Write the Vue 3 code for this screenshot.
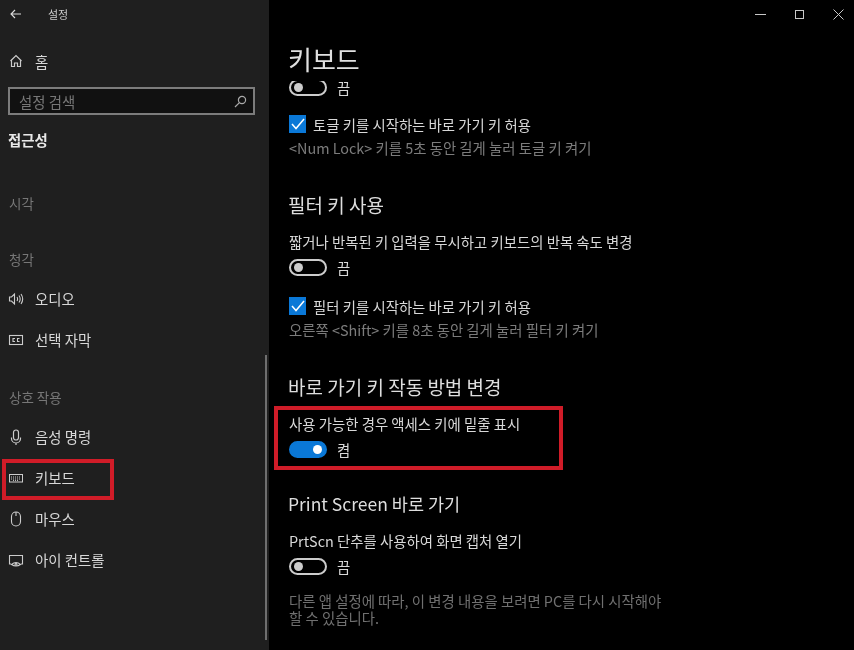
<script setup>
const visual = [
  { key: 'audio', label: '오디오' },
  { key: 'cc', label: '선택 자막' },
]
const interact = [
  { key: 'mic', label: '음성 명령' },
  { key: 'kbd', label: '키보드' },
  { key: 'mouse', label: '마우스' },
  { key: 'eye', label: '아이 컨트롤' },
]
</script>

<template>
  <div class="window">
    <aside class="side">
      <div class="titlebar">
        <svg class="back" width="11" height="10" viewBox="0 0 11 10" fill="none" stroke="currentColor" stroke-width="1.1"><path d="M1 5h10M5 1 1 5l4 4" /></svg>
        <span class="apptitle">설정</span>
      </div>
      <div class="row home">
        <svg class="ico" width="16" height="16" viewBox="0 0 16 16" fill="none" stroke="currentColor" stroke-width="1.2"><path d="M2.500 8l5.500-5.500L13.500 8M3.500 7v6.500h3V10h3v3.500h3V7" /></svg>
        <span>홈</span>
      </div>
      <div class="search">
        <span>설정 검색</span>
        <svg width="13" height="13" viewBox="0 0 13 13" fill="none" stroke="currentColor" stroke-width="1.2"><circle cx="8" cy="5" r="3.6" /><path d="M5.400 7.600 1 12" /></svg>
      </div>
      <div class="category">접근성</div>
      <div class="group g1">시각</div>
      <div class="group g2">청각</div>
      <div v-for="i in visual" :key="i.key" class="row">
        <svg v-if="i.key === 'audio'" class="ico" width="16" height="16" viewBox="0 0 16 16" fill="none" stroke="currentColor" stroke-width="1.1"><path d="M1.500 6v4h2l3 3V3l-3 3zM9 6q1.200 2 0 4M11 4.500q2.400 3.500 0 7M13 3q3.400 5 0 10" /></svg>
        <svg v-else class="ico" width="16" height="16" viewBox="0 0 16 16" fill="none" stroke="currentColor" stroke-width="1.1"><rect x="1.500" y="3.500" width="13" height="9" /><path d="M7 6.500H5v3h2M11.500 6.500h-2v3h2" /></svg>
        <span>{{ i.label }}</span>
      </div>
      <div class="group g3">상호 작용</div>
      <div v-for="i in interact" :key="i.key" class="row">
        <svg v-if="i.key === 'mic'" class="ico" width="16" height="16" viewBox="0 0 16 16" fill="none" stroke="currentColor" stroke-width="1.2"><rect x="5.500" y="1" width="5" height="10" rx="2.500" /><path d="M3.500 8.500v1a4.500 4.500 0 0 0 9 0v-1M8 14v2" /></svg>
        <svg v-else-if="i.key === 'kbd'" class="ico" width="16" height="16" viewBox="0 0 16 16" fill="none" stroke="currentColor" stroke-width="1"><rect x="1.500" y="4.500" width="13" height="7.500" /><path d="M3 7h10M3 9h10M5 10.600h6" stroke-dasharray="1 1" /></svg>
        <svg v-else-if="i.key === 'mouse'" class="ico" width="16" height="16" viewBox="0 0 16 16" fill="none" stroke="currentColor" stroke-width="1.1"><rect x="3.500" y="1" width="9" height="14" rx="4.500" /><path d="M8 1v4" /></svg>
        <svg v-else class="ico" width="16" height="16" viewBox="0 0 16 16" fill="none" stroke="currentColor" stroke-width="1.1"><path d="M3 12H1.500V3.500h13V12H13" /><path d="M3.500 12.500Q8 8.500 12.500 12.500 8 15.500 3.500 12.500z" /><circle cx="8" cy="12.300" r="1" /></svg>
        <span>{{ i.label }}</span>
      </div>
      <div class="sidebar-scroll"></div>
      <div class="mark mark-side"></div>
    </aside>

    <main class="main">
      <div class="controls">
        <svg width="11" height="12" viewBox="0 0 11 12" stroke="currentColor" fill="none"><path d="M0 6.500h11" /></svg>
        <svg width="11" height="12" viewBox="0 0 11 12" stroke="currentColor" fill="none"><rect x="1.500" y="2.500" width="8" height="8" /></svg>
        <svg width="11" height="12" viewBox="0 0 11 12" stroke="currentColor" fill="none"><path d="M.5 1.500l10 10M10.500 1.500l-10 10" /></svg>
      </div>
      <h1>키보드</h1>
      <div class="viewport">
        <div class="scroller">
          <div class="toggle-row first"><span class="toggle"><i></i></span><span>끔</span></div>

          <label class="check"><span class="box"><svg width="14" height="12" viewBox="0 0 14 12" fill="none" stroke="#fff" stroke-width="1.500"><path d="M1 6l4 4.500L13 1" /></svg></span>토글 키를 시작하는 바로 가기 키 허용</label>
          <p class="hint">&lt;Num Lock&gt; 키를 5초 동안 길게 눌러 토글 키 켜기</p>

          <h2 class="h-filter">필터 키 사용</h2>
          <p class="label">짧거나 반복된 키 입력을 무시하고 키보드의 반복 속도 변경</p>
          <div class="toggle-row"><span class="toggle"><i></i></span><span>끔</span></div>

          <label class="check c2"><span class="box"><svg width="14" height="12" viewBox="0 0 14 12" fill="none" stroke="#fff" stroke-width="1.500"><path d="M1 6l4 4.500L13 1" /></svg></span>필터 키를 시작하는 바로 가기 키 허용</label>
          <p class="hint">오른쪽 &lt;Shift&gt; 키를 8초 동안 길게 눌러 필터 키 켜기</p>

          <h2 class="h-short">바로 가기 키 작동 방법 변경</h2>
          <p class="label">사용 가능한 경우 액세스 키에 밑줄 표시</p>
          <div class="toggle-row"><span class="toggle on"><i></i></span><span>켬</span></div>

          <h2 class="h-print">Print Screen 바로 가기</h2>
          <p class="label">PrtScn 단추를 사용하여 화면 캡처 열기</p>
          <div class="toggle-row"><span class="toggle"><i></i></span><span>끔</span></div>

          <p class="note">다른 앱 설정에 따라, 이 변경 내용을 보려면 PC를 다시 시작해야<br />할 수 있습니다.</p>
        </div>
      </div>
      <div class="mark mark-main"></div>
    </main>
  </div>
</template>

<style>
html, body { margin: 0; background: #000; }
</style>

<style scoped>
.window {
  width: 854px;
  height: 650px;
  display: flex;
  overflow: hidden;
  font-family: "Noto Sans CJK KR", "Liberation Sans", sans-serif;
  font-size: 14.4px;
  color: #d8d8d8;
  background: #000;
  filter: blur(0.35px);
}
.side {
  position: relative;
  flex: 0 0 269px;
  background: #1f1f1f;
  display: flex;
  flex-direction: column;
}
.titlebar {
  height: 28px;
  display: flex;
  align-items: center;
  padding-left: 10px;
}
.back { color: #ddd; }
.apptitle { margin-left: 27px; font-size: 11px; color: #ccc; }
.row {
  height: 41px;
  flex: none;
  display: flex;
  align-items: center;
  padding-left: 8px;
  gap: 11px;
}
.row .ico { flex: none; color: #ccc; }
.home { height: 26px; margin-top: 20px; }
.search {
  margin: 13px 14px 0 8px;
  height: 24px;
  border: 2px solid #7c7c7c;
  background: #111;
  color: #777;
  display: flex;
  align-items: center;
  justify-content: space-between;
  padding: 0 6px 0 9px;
}
.search svg { color: #aaa; }
.category {
  margin: 13px 0 0 8px;
  height: 24px;
  line-height: 24px;
  font-weight: 700;
  color: #e8e8e8;
}
.group {
  margin-left: 9px;
  height: 20px;
  line-height: 20px;
  color: #777;
  font-size: 13.500px;
}
.g1 { margin-top: 41px; }
.g2 { margin-top: 36px; margin-bottom: 9px; }
.g3 { margin-top: 27px; margin-bottom: 9px; }
.sidebar-scroll {
  position: absolute;
  left: 265px;
  top: 355px;
  width: 2px;
  height: 285px;
  background: #6f6f6f;
}
.mark { position: absolute; border: 4px solid #d01c28; box-sizing: border-box; }
.mark-side { left: 2px; top: 459px; width: 112px; height: 41px; }
.mark-main { left: 5px; top: 406px; width: 289px; height: 64px; }

.main { position: relative; flex: 1; min-width: 0; display: flex; flex-direction: column; }
.controls {
  position: absolute;
  right: 10px;
  top: 8px;
  display: flex;
  gap: 28px;
  color: #c8c8c8;
}
h1 {
  margin: 44px 0 0 19px;
  height: 37px;
  line-height: 30px;
  font-size: 26px;
  font-weight: 400;
  color: #e0e0e0;
}
.viewport { flex: 1; overflow: hidden; }
.scroller { padding-left: 20px; margin-top: -4px; }
.toggle-row {
  height: 20px;
  display: flex;
  align-items: center;
  gap: 10px;
  margin-top: 5px;
}
.toggle-row.first { margin-top: 0; }
.toggle {
  box-sizing: border-box;
  width: 38px;
  height: 17px;
  border-radius: 9px;
  border: 2px solid #ccc;
  display: flex;
  align-items: center;
  padding: 0 3px;
}
.toggle i { display: block; width: 9px; height: 9px; border-radius: 50%; background: #ccc; }
.toggle.on { background: #0a78d7; border-color: #0a78d7; justify-content: flex-end; }
.toggle.on i { background: #fff; }
.check {
  display: flex;
  align-items: center;
  height: 20px;
  margin-top: 17px;
  gap: 7px;
}
.c2 { margin-top: 19px; }
.box {
  width: 17px;
  height: 18px;
  background: #0a78d7;
  display: flex;
  align-items: center;
  justify-content: center;
}
.hint { margin: 4px 0 0; height: 20px; line-height: 20px; color: #7c7c7c; }
h2 {
  height: 26px;
  line-height: 26px;
  margin: 0 0 0 -1px;
  font-size: 19px;
  font-weight: 400;
  color: #dedede;
}
.h-filter { margin-top: 34px; }
.h-short { margin-top: 34px; }
.h-print { margin-top: 32px; font-size: 17.500px; }
.label { margin: 14px 0 0; height: 20px; line-height: 20px; }
.note { margin: 16px 0 0; line-height: 17px; color: #707070; }
</style>
